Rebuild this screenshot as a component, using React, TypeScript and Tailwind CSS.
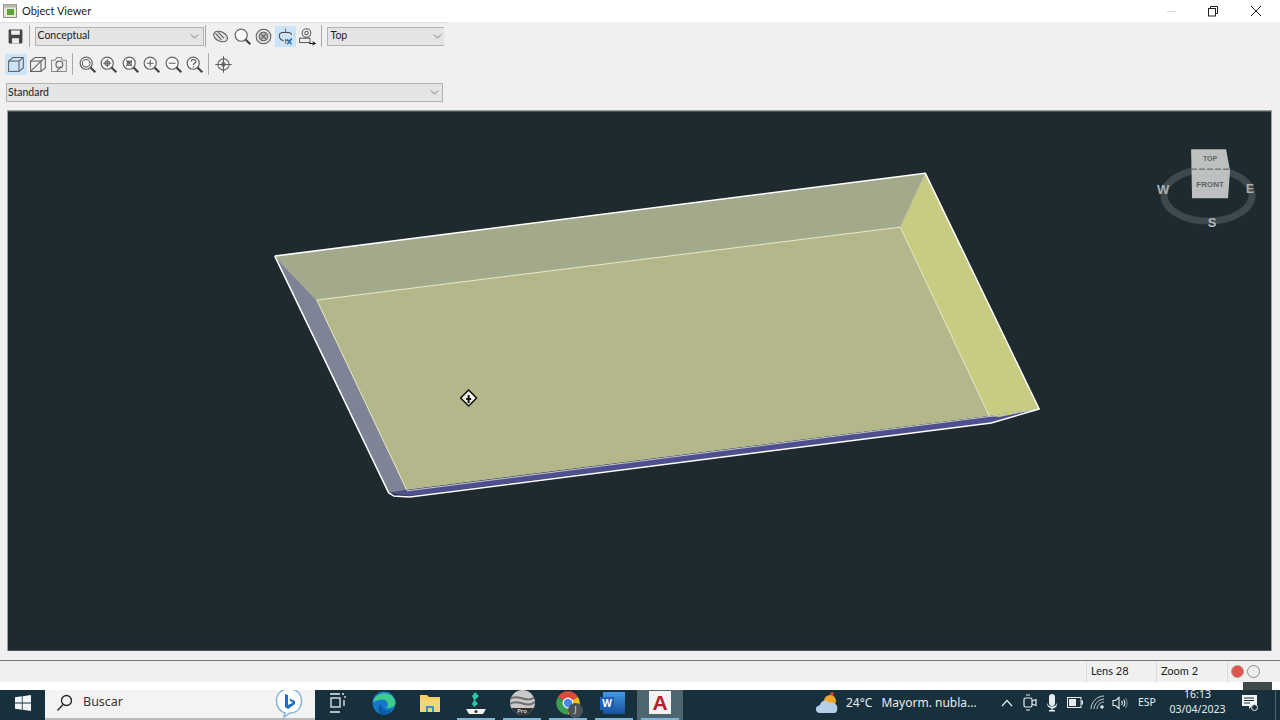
import type { ReactNode } from 'react'
import { ChevronDown } from 'lucide-react'

function Sep() {
  return <div className="h-[22px] w-px bg-[#a9a9a9]" />
}

function Combo({ label, className }: { label: string; className: string }) {
  return (
    <div className={`flex items-center justify-between border-y border-l border-[#b4b4b4] bg-[#e4e4e4] text-[10.5px] text-[#222] ${className}`}>
      <span>{label}</span>
      <ChevronDown size={13} strokeWidth={1.2} className="text-[#444]" />
    </div>
  )
}

function Tool({ active, children }: { active?: boolean; children: ReactNode }) {
  return (
    <div className={`flex h-[21px] w-[21.5px] shrink-0 items-center justify-center ${active ? 'bg-[#cce4f7]' : ''}`}>
      <svg width="19" height="19" viewBox="0 0 22 22" fill="none" stroke="#5d5d5d" strokeWidth="1.2">
        {children}
      </svg>
    </div>
  )
}

function Lens({ children }: { children?: ReactNode }) {
  return (
    <>
      <circle cx="9.5" cy="9.5" r="7" fill="#fafafa" stroke="#666" strokeWidth="1.4" />
      <path d="M14.5 14.5 L20 20" stroke="#444" strokeWidth="2.6" />
      {children}
    </>
  )
}

function Scene() {
  return (
    <svg viewBox="8 111 1264 540" className="block h-full w-full">
      <rect x="8" y="111" width="1264" height="540" fill="#1f2a2f" />
      {/* tray walls */}
      <polygon points="275,256 926,173 901,227 317,300" fill="#a3a98b" />
      <polygon points="926,173 1040,409 990,416 901,227" fill="#c8cc80" />
      <polygon points="317,300 901,227 990,416 407,490" fill="#b3b78a" />
      <polygon points="275,256 317,300 407,490 389,493" fill="#7f8396" />
      <polygon points="389,493 407,490 990,416 1040,409 992,423 410,496" fill="#4e4f8e" />
      <polygon points="990,416 1040,409 1000,417" fill="#c8cc80" />
      {/* edges */}
      <path d="M317 300 L901 227 L990 416 M317 300 L407 490" stroke="#eef0d0" strokeWidth="1" fill="none" />
      <path d="M901 227 L926 173 M275 256 L317 300" stroke="#c4c8b0" strokeWidth="0.8" fill="none" />
      <path d="M407 491 L990 416.5 L1040 409" stroke="#c6c8c8" strokeWidth="1" fill="none" />
      <path d="M275 256 L926 173 L1040 409 L992 423 L410 497 L394 496 L389 493 L275 256" stroke="#fff" strokeWidth="1.5" fill="none" strokeLinejoin="round" />
      {/* pan cursor */}
      <g transform="translate(469 398)">
        <polygon points="0,-8 8,0 0,8 -8,0" fill="#f2f2e8" stroke="#111" strokeWidth="1.6" strokeLinejoin="round" />
        <path d="M0 -3 L0 5 M-2.5 1 L2.5 1" stroke="#111" strokeWidth="2" />
      </g>
      {/* view cube */}
      <ellipse cx="1209" cy="195" rx="44" ry="26" fill="none" stroke="#3e494e" strokeWidth="7" />
      <polygon points="1192,149 1227,149 1231,170 1229,198 1193,198" fill="#bdc0c0" />
      <path d="M1192 169 L1231 169" stroke="#555" strokeWidth="1" strokeDasharray="6 2" />
      <g fontFamily="Liberation Sans, sans-serif" fontWeight="700" textAnchor="middle">
        <text x="1211" y="161" fontSize="7" fill="#666">TOP</text>
        <text x="1211" y="187" fontSize="8" fill="#5d6264">FRONT</text>
        <text x="1164" y="194" fontSize="13" fill="#a9aeb0">W</text>
        <text x="1251" y="193" fontSize="12" fill="#a9aeb0">E</text>
        <text x="1213" y="227" fontSize="13" fill="#b5babb">S</text>
      </g>
    </svg>
  )
}

function EdgeIcon() {
  return (
    <svg width="24" height="24" viewBox="0 0 24 24">
      <circle cx="12" cy="12" r="11.5" fill="#1477c9" />
      <path d="M1 11 C3 1 20 -2 23.5 11 C24 16 18 18 14 17 C18 14 15 8 10 8.5 C5 9 2 11 1 11 Z" fill="#3ccb8c" />
      <path d="M9 13 C9 18 14 21 20 19 C17 23 11 24 8 22 C5 19 7 14 9 13 Z" fill="#0b5aa8" />
    </svg>
  )
}

function ChromeIcon() {
  return (
    <div className="relative h-[24px] w-[24px]">
      <svg width="24" height="24" viewBox="0 0 24 24">
        <path d="M12 12 L2 6 A11.5 11.5 0 0 1 22 6 Z" fill="#dd4b3e" />
        <path d="M12 12 L22 6 A11.5 11.5 0 0 1 12 23.5 Z" fill="#f4c20d" />
        <path d="M12 12 L12 23.5 A11.5 11.5 0 0 1 2 6 Z" fill="#3a9d4f" />
        <circle cx="12" cy="12" r="5.4" fill="#fff" />
        <circle cx="12" cy="12" r="4.2" fill="#4a87e8" />
      </svg>
      <div className="absolute -bottom-[3px] -right-[3px] flex h-[15px] w-[15px] items-center justify-center rounded-full bg-[#4a5458] text-[9px] text-[#d8dcdc]">J</div>
    </div>
  )
}

function Pin({ active, running, children }: { active?: boolean; running?: boolean; children: ReactNode }) {
  return (
    <div className={`relative flex h-full w-[46px] shrink-0 items-center justify-center pb-[5px] ${active ? 'bg-[#4f666e]' : ''}`}>
      {children}
      {running && <div className="absolute bottom-0 left-[4px] right-[4px] h-[2px] bg-[#7fb6d8]" />}
    </div>
  )
}

export default function App() {
  return (
    <div className='flex h-[720px] w-[1280px] flex-col overflow-hidden bg-[#f0f0f0] font-["Noto_Sans","Liberation_Sans",sans-serif]'>
      {/* title bar */}
      <div className="flex h-[22px] shrink-0 items-center bg-white pl-[3px]">
        <svg width="14" height="14" viewBox="0 0 14 14">
          <rect x="0.5" y="0.5" width="13" height="13" fill="#e6e6dc" stroke="#8d8d80" />
          <rect x="0.5" y="0.5" width="13" height="3" fill="#b9b9a8" />
          <rect x="4" y="5" width="7" height="6" fill="#5aa53c" />
        </svg>
        <span className='ml-[5px] font-["Lato",sans-serif] text-[11px] text-[#1c1c1c]'>Object Viewer</span>
        <div className="ml-auto flex h-full items-center">
          <div className="mr-[31px] h-px w-[9px] bg-[#d8d8d8]" />
          <svg width="12" height="12" viewBox="0 0 12 12" fill="none" stroke="#222" strokeWidth="1">
            <rect x="1.5" y="3.5" width="7" height="7.5" />
            <path d="M3.5 3.5 V1.5 H10.5 V8.5 H8.5" />
          </svg>
          <svg width="12" height="12" viewBox="0 0 12 12" stroke="#222" strokeWidth="1" className="ml-[31px] mr-[18px]">
            <path d="M1 1 L11 11 M11 1 L1 11" />
          </svg>
        </div>
      </div>

      {/* toolbars */}
      <div className='h-[88px] shrink-0 font-["Lato",sans-serif]'>
        <div className="w-[448px] border-t border-[#dedede]">
          <div className="flex h-[26px] items-center pl-[5px]">
            <Tool>
              <rect x="3" y="3" width="16" height="16" rx="1" fill="#454545" stroke="none" />
              <rect x="6" y="4" width="10" height="5" fill="#eee" stroke="none" />
              <rect x="7" y="13" width="8" height="6" fill="#eee" stroke="none" />
            </Tool>
            <div className="ml-[2px] mr-[5px]"><Sep /></div>
            <Combo label="Conceptual" className="h-[19px] w-[169px] border-r pl-[2px] pr-[2px]" />
            <div className="ml-[1.5px] mr-[4px]"><Sep /></div>
            <Tool>
              <ellipse cx="11" cy="11" rx="8.5" ry="5.5" transform="rotate(25 11 11)" fill="#e2e2e2" />
              <path d="M5 7 L12 15 M8 6 L15 13" />
            </Tool>
            <Tool><Lens /></Tool>
            <Tool>
              <circle cx="11" cy="11" r="8.5" fill="#e4e4e4" />
              <circle cx="11" cy="11" r="5" fill="#bbb" />
              <path d="M8 8 L14 14 M14 8 L8 14" />
            </Tool>
            <Tool active>
              <path d="M11 2 V8 M11 14 V20" stroke="#7a4a4a" strokeDasharray="2 1" />
              <path d="M4 9 C4 5 18 5 18 9 M18 13 C18 15 14 16 11 16 M4 9 C3 13 6 15 9 16" stroke="#444" />
              <path d="M13 14 L18 20 M18 14 L13 20" stroke="#2f6fb0" strokeWidth="1.6" />
            </Tool>
            <Tool>
              <circle cx="11" cy="7" r="5" />
              <circle cx="11" cy="7" r="2" />
              <rect x="3" y="13" width="12" height="5" />
              <path d="M14 19 H21 M18 17 L21 19 L18 21" stroke="#222" />
            </Tool>
            <div className="ml-[3px] mr-[5px]"><Sep /></div>
            <Combo label="Top" className="h-[19px] w-[117px] pl-[3px]" />
          </div>

          <div className="mt-[2px] flex h-[26px] items-center pl-[5px]">
            <Tool active>
              <rect x="3" y="7" width="12" height="12" />
              <path d="M3 7 L8 3 H20 V15 L15 19 M15 7 L20 3" />
            </Tool>
            <Tool>
              <rect x="3" y="7" width="12" height="12" />
              <path d="M3 7 L8 3 H20 V15 L15 19 M15 7 L20 3 M3 19 L15 7" />
            </Tool>
            <Tool>
              <path d="M3 6 H7 L9 3 H14 L16 6 H20 V19 H3 Z" stroke="#888" />
              <circle cx="12" cy="11" r="4" />
              <path d="M9 19 L14 13" />
            </Tool>
            <div className="ml-[2px] mr-[4px]"><Sep /></div>
            <Tool><Lens><circle cx="9.5" cy="9.5" r="4.4" /></Lens></Tool>
            <Tool><Lens><circle cx="9.5" cy="9.5" r="2.6" /><path d="M9.5 5 V14 M5 9.5 H14" /></Lens></Tool>
            <Tool><Lens><path d="M6 6 L13 13 M13 6 L6 13" /><circle cx="9.5" cy="9.5" r="2.4" /></Lens></Tool>
            <Tool><Lens><path d="M9.5 5.5 V13.5 M5.5 9.5 H13.5" /></Lens></Tool>
            <Tool><Lens><path d="M5.5 9.5 H13.5" /></Lens></Tool>
            <Tool><Lens><path d="M7 7.5 C7 4.5 12.5 4.5 12.5 7.5 C12.5 9.5 9.7 9.5 9.7 11.5 M9.7 13 V14.4" strokeWidth="1.5" /></Lens></Tool>
            <div className="ml-[2px] mr-[4px]"><Sep /></div>
            <Tool>
              <circle cx="11" cy="11" r="6.5" />
              <circle cx="11" cy="11" r="2" fill="#999" />
              <path d="M11 1.5 V20.5 M1.5 11 H20.5" />
            </Tool>
          </div>

          <Combo label="Standard" className="ml-[6px] mt-[6px] h-[19px] w-[437px] border-r pl-[1px] pr-[1px]" />
        </div>
      </div>

      {/* viewport */}
      <div className="ml-[7px] mr-[8px] h-[541px] shrink-0 border border-b-0 border-[#9aa0a2]">
        <Scene />
      </div>

      {/* status bar */}
      <div className='mt-[9px] flex h-[22px] shrink-0 items-center border-t border-[#777] pr-[20px] font-["Lato",sans-serif] text-[11px] text-[#222]'>
        <div className="ml-auto flex h-full w-[70px] items-center border-l border-[#dcdcdc] pl-[4px]">Lens 28</div>
        <div className="flex h-full w-[71px] items-center border-l border-[#dcdcdc] pl-[4px]">Zoom 2</div>
        <div className="flex h-full items-center gap-[3px] border-l border-[#dcdcdc] pl-[3px]">
          <div className="h-[13px] w-[13px] rounded-full border border-[#b98] bg-[#e0544f]" />
          <div className="h-[13px] w-[13px] rounded-full border border-[#888] bg-[#eee]" />
        </div>
      </div>

      {/* white strip under the app */}
      <div className="flex h-[8px] shrink-0 justify-end bg-white pr-[8px]">
        <div className="h-full w-[29px] bg-[#3f484b]" />
      </div>

      {/* taskbar */}
      <div className="flex h-[30px] shrink-0 items-center overflow-hidden bg-[#17303c] text-[#e6ecee]">
        <div className="flex h-full w-[45px] shrink-0 items-center justify-center pb-[5px]">
          <svg width="16" height="16" viewBox="0 0 16 16" fill="#f2f6f7">
            <path d="M0 2.3 L6.8 1.3 V7.6 H0 Z M7.6 1.2 L16 0 V7.6 H7.6 Z M0 8.4 H6.8 V14.7 L0 13.7 Z M7.6 8.4 H16 V16 L7.6 14.8 Z" />
          </svg>
        </div>
        <div className="flex h-full w-[270px] shrink-0 items-center border-b-2 border-[#b9b9b9] bg-[#f3f3f3] pb-[3px] pl-[11px] text-[#333]">
          <svg width="17" height="18" viewBox="0 0 17 18" fill="none" stroke="#222" strokeWidth="1.3">
            <circle cx="10.5" cy="6.5" r="5" />
            <path d="M7 10.5 L1.5 16.5" />
          </svg>
          <span className="ml-[10px] text-[12.5px]">Buscar</span>
          <div className="ml-auto mr-[12px]">
            <svg width="28" height="30" viewBox="0 0 28 30">
              <path d="M14 1 C6 1 1.5 6 1.5 13 C1.5 20 6 24 10 25 L9 29 L15 25 C22 25 26.5 20 26.5 13 C26.5 6 22 1 14 1 Z" fill="#fff" stroke="#7fb0dc" strokeWidth="1.4" />
              <path d="M10 6 L13 7 V17 L18 14.5 L15 13 L14.5 10.5 L20 13 V16 L13 21 L10 19 Z" fill="#1f6fc0" />
            </svg>
          </div>
        </div>
        <Pin>
          <svg width="18" height="20" viewBox="0 0 18 20" fill="none" stroke="#e8eeef" strokeWidth="1.3">
            <path d="M1 1 H11 M1 19 H11 M13 1 H15 M15 7 V13" />
            <rect x="2" y="5" width="9" height="9" />
            <path d="M16 3 V5" />
          </svg>
        </Pin>
        <Pin><EdgeIcon /></Pin>
        <Pin>
          <svg width="22" height="22" viewBox="0 0 22 22">
            <path d="M1 3 H8 L10 5 H21 V20 H1 Z" fill="#f5cd5c" />
            <rect x="1" y="7" width="20" height="13" fill="#f3d675" />
            <path d="M7 20 V14 H15 V20 H13 V16 H9 V20 Z" fill="#3e8fc9" />
          </svg>
        </Pin>
        <Pin running>
          <svg width="24" height="26" viewBox="0 0 24 26">
            <path d="M11 2 L15 6 L11 10 L14 14 L10 17 L8 14 L10 10 L8 6 Z" fill="#27c6a4" />
            <path d="M2 19 H22 L19 24 H5 Z" fill="#f4f6f6" />
            <circle cx="12" cy="21.5" r="1.6" fill="#333" />
          </svg>
        </Pin>
        <Pin running>
          <div className="relative h-[25px] w-[25px] overflow-hidden rounded-full bg-[#c9c9c9]">
            <svg width="25" height="25" viewBox="0 0 25 25" fill="none" stroke="#6f6f6f" strokeWidth="2">
              <path d="M0 9 C8 3 16 14 25 7 M0 14 C8 8 16 19 25 12" />
            </svg>
            <div className="absolute bottom-0 left-0 right-0 bg-[#333] text-center text-[6px] leading-[7px] text-white">Pro</div>
          </div>
        </Pin>
        <Pin running><ChromeIcon /></Pin>
        <Pin running>
          <div className="relative h-[22px] w-[22px] bg-gradient-to-b from-[#3f9be6] to-[#1b4f9e]">
            <div className="absolute left-[-3px] top-[5px] flex h-[13px] w-[14px] items-center justify-center bg-[#1d5fb5] text-[10px] font-bold text-white">W</div>
          </div>
        </Pin>
        <Pin active running>
          <div className="flex h-[23px] w-[22px] items-center justify-center bg-[#f2f2f2] text-[21px] font-bold leading-[23px] text-[#b3202c] [font-family:'Liberation_Sans',sans-serif]">A</div>
        </Pin>

        {/* tray */}
        <div className="ml-auto flex h-full shrink-0 items-center pb-[5px]">
          <div className="flex w-[30px] justify-center">
            <svg width="26" height="24" viewBox="0 0 26 24">
              <circle cx="18" cy="3" r="2" fill="#d33a2c" />
              <circle cx="16" cy="10" r="6" fill="#f0a72e" />
              <path d="M6 22 C1 22 0 15 6 14 C7 9 13 8 15 12 C19 10 25 14 23 19 C23 21 22 22 20 22 Z" fill="#b6cfe8" />
            </svg>
          </div>
          <div className="flex w-[154px] items-center gap-[9px] pl-[4px] text-[12px]">
            <span>24°C</span>
            <span>Mayorm. nubla...</span>
          </div>
          <div className="flex w-[22.5px] justify-center">
            <svg width="12" height="8" viewBox="0 0 12 8" fill="none" stroke="#e6ecee" strokeWidth="1.2"><path d="M1 7 L6 1.5 L11 7" /></svg>
          </div>
          <div className="flex w-[22.5px] justify-center">
            <svg width="14" height="18" viewBox="0 0 14 18" fill="none" stroke="#e6ecee" strokeWidth="1.2">
              <rect x="1" y="4" width="8" height="9" rx="1.5" />
              <path d="M9 7 L13 5.5 V11.5 L9 10 M3 1 H7 M3 16 H7" />
            </svg>
          </div>
          <div className="flex w-[22.5px] justify-center">
            <svg width="12" height="18" viewBox="0 0 12 18" fill="#e6ecee">
              <rect x="3" y="0" width="6" height="12" rx="3" />
              <path d="M1 8 C1 14 11 14 11 8 V10 C11 14 7 14.5 6.6 14.5 V16 H9 V17.5 H3 V16 H5.4 V14.5 C3 14 1 12 1 10 Z" />
            </svg>
          </div>
          <div className="flex w-[22.5px] justify-center">
            <svg width="16" height="11" viewBox="0 0 16 11" fill="none" stroke="#e6ecee">
              <rect x="0.5" y="0.5" width="13.5" height="10" />
              <rect x="2" y="2" width="7" height="7" fill="#e6ecee" stroke="none" />
              <rect x="14.5" y="3.5" width="1.5" height="4" fill="#e6ecee" stroke="none" />
            </svg>
          </div>
          <div className="flex w-[22.5px] justify-center">
            <svg width="15" height="15" viewBox="0 0 15 15" fill="none" stroke="#c6ced1" strokeWidth="1">
              <path d="M1 14 C1 7 7 1 14 1 M4 14 C4 9 9 4 14 4 M7 14 C7 11 10 7 14 7" />
              <circle cx="12" cy="12" r="1.7" fill="#e6ecee" stroke="none" />
            </svg>
          </div>
          <div className="flex w-[22.5px] justify-center">
            <svg width="16" height="14" viewBox="0 0 16 14" fill="none" stroke="#e6ecee" strokeWidth="1.1">
              <path d="M1 4.5 H3.5 L7 1.5 V12.5 L3.5 9.5 H1 Z" />
              <path d="M9.5 5 C10.5 6 10.5 8 9.5 9 M11.5 3.5 C13 5.5 13 8.5 11.5 10.5" />
              <path d="M13.5 2 C15.5 5 15.5 9 13.5 12" stroke="#6f7f86" />
            </svg>
          </div>
          <div className="w-[32px] text-center text-[10.5px]">ESP</div>
          <div className="-mb-[5px] flex h-[30px] w-[69px] flex-col items-center justify-end pb-[3px] text-[10.5px] leading-[15px]">
            <span>16:13</span>
            <span>03/04/2023</span>
          </div>
          <div className="flex w-[34px] justify-center">
            <svg width="17" height="17" viewBox="0 0 17 17">
              <path d="M1 1 H16 V12 H11 L8 15 V12 H1 Z" fill="#f3f5f5" />
              <path d="M3 4 H13 M3 6.5 H13 M3 9 H9" stroke="#17303c" />
              <circle cx="13.5" cy="13.5" r="3" fill="#17303c" stroke="#e6ecee" />
            </svg>
          </div>
          <div className="-mb-[5px] ml-[9px] mr-[4px] h-[30px] w-px bg-[#4d626c]" />
        </div>
      </div>
    </div>
  )
}
